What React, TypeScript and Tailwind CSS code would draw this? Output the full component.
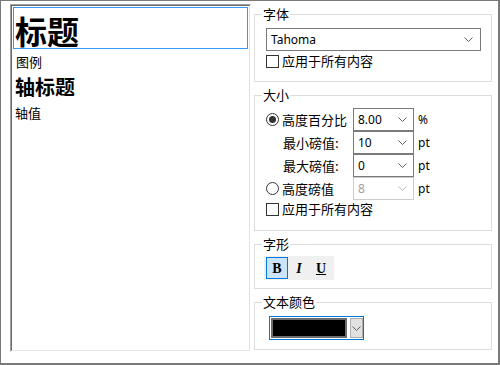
import React from 'react';

const cjk = "font-['Noto_Sans_CJK_SC',sans-serif]";
const latin = "font-['Noto_Sans',sans-serif]";

function Chevron({ color = '#606060' }: { color?: string }) {
  return (
    <svg width="9" height="5" viewBox="0 0 9 5" className="shrink-0">
      <polyline points="0.5,0.5 4.5,4.5 8.5,0.5" fill="none" stroke={color} strokeWidth="1" />
    </svg>
  );
}

function Combo({ value, disabled, className }: { value: string; disabled?: boolean; className: string }) {
  return (
    <div
      className={`flex h-[23px] items-center justify-between border pl-[4px] pr-[6px] text-[12px] ${latin} ${
        disabled ? 'border-[#cccccc] text-[#a0a0a0]' : 'border-[#7a7a7a] text-black'
      } ${className}`}
    >
      <span>{value}</span>
      <Chevron color={disabled ? '#bcbcbc' : '#606060'} />
    </div>
  );
}

function CheckRow({ label, className }: { label: string; className: string }) {
  return (
    <label className={`flex h-[16px] items-center ${className}`}>
      <span className="h-[13px] w-[13px] border border-[#333333] bg-white" />
      <span className="ml-[3px]">{label}</span>
    </label>
  );
}

function Radio({ checked }: { checked?: boolean }) {
  return (
    <span className="flex h-[13px] w-[13px] items-center justify-center rounded-full border border-[#333333] bg-white">
      {checked && <span className="h-[7px] w-[7px] rounded-full bg-[#333333]" />}
    </span>
  );
}

function Group({ title, h, children }: { title: string; h: string; children: React.ReactNode }) {
  return (
    <fieldset className={`border border-[#dcdcdc] ${h}`}>
      <legend className="ml-[7px] px-[1px] text-[13px] leading-[16px]">{title}</legend>
      {children}
    </fieldset>
  );
}

export default function App() {
  return (
    <div
      className={`flex h-[365px] w-[500px] gap-[3px] border-t border-l border-r-2 border-b-2 border-[#7a7a7a] bg-white pl-[9px] pt-[3px] text-[13px] text-black ${cjk}`}
    >
      {/* 预览列表 */}
      <div className="h-[348px] w-[241px] border-t border-l border-r border-b border-t-[#a0a0a0] border-l-[#a0a0a0] border-r-white border-b-white">
        <div className="h-full border-t border-l border-r border-b border-t-[#696969] border-l-[#696969] border-r-[#e3e3e3] border-b-[#e3e3e3]">
          <div className="mx-[1px] mt-[1px] h-[42px] border border-[#3399ff] pl-[1px] pt-[4px] text-[32px] font-bold leading-[36px]">
            标题
          </div>
          <div className="h-[26px] pl-[4px] text-[13px] leading-[26px]">图例</div>
          <div className="h-[24px] pl-[3px] text-[20px] font-bold leading-[24px]">轴标题</div>
          <div className="h-[28px] pl-[3px] text-[13px] leading-[28px]">轴值</div>
        </div>
      </div>

      {/* 设置 */}
      <div className="flex w-[238px] flex-col gap-[5px] pt-[2px]">
        <Group title="字体" h="h-[76px]">
          <div className="pl-[11px] pt-[6px]">
            <div className={`flex h-[23px] w-[215px] items-center justify-between border border-[#7a7a7a] pl-[4px] pr-[7px] text-[12px] ${latin}`}>
              <span>Tahoma</span>
              <Chevron />
            </div>
            <CheckRow label="应用于所有内容" className="mt-[2px]" />
          </div>
        </Group>

        <Group title="大小" h="h-[144px]">
          <div className="pl-[11px] pt-[5px]">
            <div className="flex h-[23px] items-center">
              <label className="flex w-[87px] items-center">
                <Radio checked />
                <span className="ml-[3px]">高度百分比</span>
              </label>
              <Combo value="8.00" className="w-[61px]" />
              <span className={`ml-[4px] text-[12px] ${latin}`}>%</span>
            </div>
            <div className="flex h-[23px] items-center">
              <span className="w-[87px] pl-[17px]">最小磅值:</span>
              <Combo value="10" className="w-[61px]" />
              <span className={`ml-[4px] text-[12px] ${latin}`}>pt</span>
            </div>
            <div className="flex h-[23px] items-center">
              <span className="w-[87px] pl-[17px]">最大磅值:</span>
              <Combo value="0" className="w-[61px]" />
              <span className={`ml-[4px] text-[12px] ${latin}`}>pt</span>
            </div>
            <div className="flex h-[23px] items-center">
              <label className="flex w-[87px] items-center">
                <Radio />
                <span className="ml-[3px]">高度磅值</span>
              </label>
              <Combo value="8" disabled className="w-[61px]" />
              <span className={`ml-[4px] text-[12px] ${latin}`}>pt</span>
            </div>
            <CheckRow label="应用于所有内容" className="mt-[1px]" />
          </div>
        </Group>

        <Group title="字形" h="h-[53px]">
          <div className="pl-[9px] pt-[4px]">
            <div className="flex h-[24px] w-[70px] items-center bg-[#f0f0f0] px-[2px] font-['Liberation_Serif',serif] text-[14px] font-bold">
              <button className="flex h-[22px] w-[22px] items-center justify-center border border-[#0078d7] bg-[#cce4f7]">B</button>
              <button className="flex h-[22px] w-[22px] items-center justify-center border border-transparent italic">I</button>
              <button className="flex h-[22px] w-[22px] items-center justify-center border border-transparent underline">U</button>
            </div>
          </div>
        </Group>

        <Group title="文本颜色" h="h-[56px]">
          <div className="pl-[14px] pt-[6px]">
            <div className="flex h-[24px] w-[95px] items-stretch border border-[#0078d7] py-[1px] pl-[1px]">
              <div className="w-[76px] border-2 border-[#6d6d6d] bg-black" />
              <div className="ml-[3px] flex w-[13px] items-center justify-center border border-[#adadad] bg-[#e1e1e1]">
                <Chevron />
              </div>
            </div>
          </div>
        </Group>
      </div>
    </div>
  );
}
